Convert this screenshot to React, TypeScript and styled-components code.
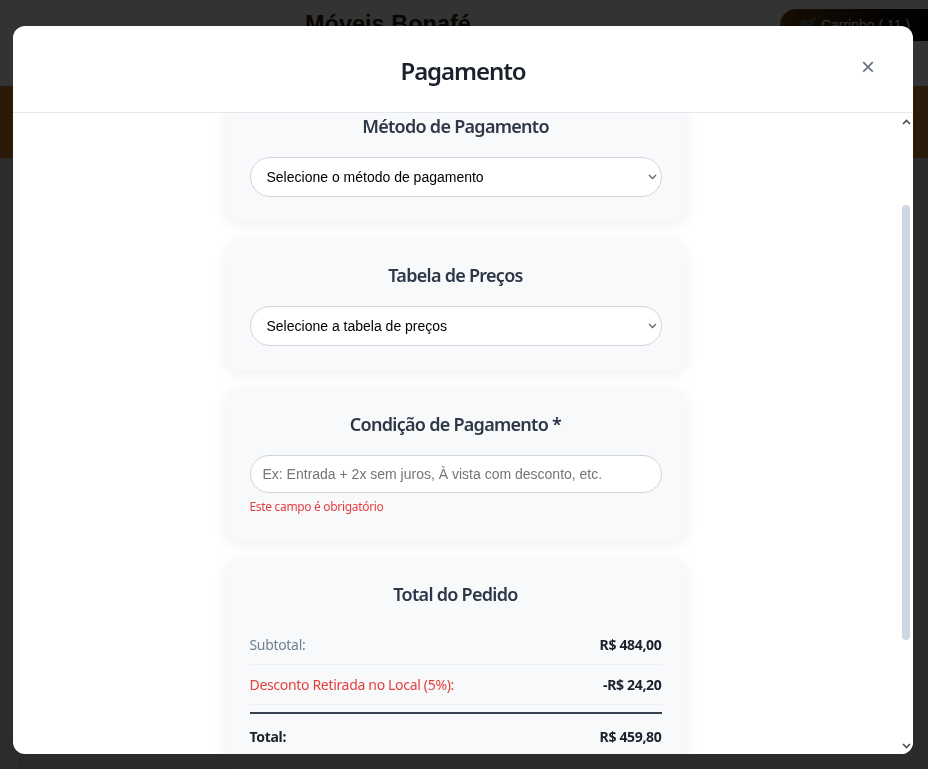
import React, { useLayoutEffect, useRef } from "react";
import styled, { createGlobalStyle } from "styled-components";

const GlobalStyle = createGlobalStyle`
  html, body { margin: 0; padding: 0; height: 100%; overflow: hidden; }
  body { font-family: "Noto Sans", "Open Sans", sans-serif; background: #dcdcdc; }
  *, *::before, *::after { box-sizing: border-box; }
`;

/* ---------- page behind the modal ---------- */
const Page = styled.div`
  height: 769px;
  display: flex;
  flex-direction: column;
  background: #dcdcdc;
`;

const SiteHeader = styled.header`
  height: 86px;
  background: #ffffff;
  display: flex;
  align-items: flex-start;
  padding: 9px 0 0 305px;
`;

const Brand = styled.h1`
  margin: 0;
  font-family: "Liberation Sans", Arial, sans-serif;
  font-size: 23.5px;
  line-height: 30px;
  font-weight: 700;
  color: #2a1a0a;
`;

const Spacer = styled.div`
  flex: 1;
`;

const CartButton = styled.button`
  width: 170px;
  margin-right: -22px;
  height: 32px;
  padding: 0 0 0 20px;
  text-align: left;
  border: none;
  border-radius: 16px;
  background: linear-gradient(90deg, #6e4210, #1a1208 60%, #000);
  color: #ffffff;
  font-family: "Liberation Sans", Arial, sans-serif;
  font-size: 14px;
`;

const Banner = styled.div`
  height: 72px;
  background: #d4842a;
`;

const SiteMain = styled.div`
  flex: 1;
  display: flex;
`;

const Sidebar = styled.aside`
  width: 208px;
  margin-left: 19px;
  border-left: 1px solid #c8c8c8;
  border-right: 1px solid #c8c8c8;
  background: #cfcfcf;
`;

const MainArea = styled.main`
  flex: 1;
  background: #d4d4d4;
`;

/* ---------- modal ---------- */
const Overlay = styled.div`
  position: fixed;
  inset: 0;
  background: rgba(0, 0, 0, 0.8);
  display: flex;
  align-items: flex-start;
  padding: 26px 15px 15px 13px;
`;

const Modal = styled.div`
  width: 900px;
  height: 728px;
  background: #ffffff;
  border-radius: 12px;
  display: flex;
  flex-direction: column;
  overflow: hidden;
  letter-spacing: -0.02em;
`;

const ModalHeader = styled.div`
  height: 87px;
  flex: none;
  display: grid;
  grid-template-columns: 1fr auto 1fr;
  align-items: center;
  padding: 0 30px;
  border-bottom: 1px solid #e5e7eb;
`;

const ModalTitle = styled.h2`
  grid-column: 2;
  margin: 4px 0 0;
  font-size: 24px;
  font-weight: 600;
  line-height: 30px;
  letter-spacing: -0.045em;
  color: #1a202c;
`;

const CloseButton = styled.button`
  grid-column: 3;
  justify-self: end;
  width: 30px;
  height: 30px;
  margin-top: -4px;
  border: none;
  background: transparent;
  color: #6b7280;
  font-family: "Liberation Sans", Arial, sans-serif;
  font-size: 24px;
  line-height: 30px;
  padding: 0;
  cursor: pointer;
`;

const ModalBody = styled.div`
  flex: 1;
  min-height: 0;
  display: flex;
`;

const ScrollArea = styled.div`
  flex: 1;
  overflow-y: auto;
  scrollbar-width: none;
  padding: 20px 1px 120px 0;
  &::-webkit-scrollbar {
    display: none;
  }
`;

const ScrollRail = styled.div`
  width: 14px;
  flex: none;
  display: flex;
  flex-direction: column;
  align-items: center;
  background: #ffffff;
`;

const RailButton = styled.div<{ $h: number }>`
  height: ${(p) => p.$h}px;
  flex: none;
  display: flex;
  align-items: center;
  justify-content: center;
  color: #4d4d4d;
`;

const RailTrack = styled.div`
  flex: 1;
  width: 100%;
  display: flex;
  justify-content: center;
`;

const RailThumb = styled.div`
  width: 8px;
  height: 435px;
  margin-top: 74px;
  border-radius: 4px;
  background: #cfd8e2;
`;

const Stack = styled.div`
  width: 462px;
  margin: 0 auto;
  display: flex;
  flex-direction: column;
  gap: 16px;
`;

const Card = styled.section`
  background: #f8f9fa;
  border-radius: 16px;
  padding: 25px;
  box-shadow: 0 4px 14px rgba(0, 0, 0, 0.06);
`;

const CardTitle = styled.h3`
  margin: 0 0 19px;
  text-align: center;
  font-size: 18px;
  font-weight: 600;
  line-height: 24px;
  letter-spacing: -0.04em;
  color: #2d3748;
`;

const SelectWrap = styled.div`
  position: relative;
`;

const Select = styled.select`
  width: 100%;
  height: 40px;
  padding: 0 24px 0 16px;
  appearance: none;
  border: 1px solid #d1d5db;
  border-radius: 20px;
  background: #ffffff;
  color: #000000;
  font-family: "Liberation Sans", Arial, sans-serif;
  font-size: 14px;
  letter-spacing: normal;
`;

const SelectChevron = styled.svg`
  position: absolute;
  right: 5px;
  top: 50%;
  transform: translateY(-50%);
  pointer-events: none;
`;

const TextInput = styled.input`
  width: 100%;
  height: 38px;
  padding: 0 12px;
  border: 1px solid #d1d5db;
  border-radius: 19px;
  background: #ffffff;
  font-family: "Liberation Sans", Arial, sans-serif;
  font-size: 14px;
  letter-spacing: normal;
  &::placeholder {
    color: #757575;
  }
`;

const ErrorText = styled.div`
  margin-top: 5px;
  font-size: 12px;
  line-height: 18px;
  color: #e53e3e;
`;

const Row = styled.div<{ $danger?: boolean }>`
  display: flex;
  justify-content: space-between;
  align-items: center;
  padding: 10px 0;
  border-bottom: 1px solid #edf0f4;
  font-size: 14px;
  line-height: 19px;
  color: ${(p) => (p.$danger ? "#e53e3e" : "#718096")};
`;

const Value = styled.span`
  font-weight: 700;
  color: #1a202c;
`;

const TotalRow = styled.div`
  margin-top: 7px;
  border-top: 2px solid #374151;
  padding: 13px 0 0;
  display: flex;
  justify-content: space-between;
  font-size: 14px;
  line-height: 19px;
  font-weight: 700;
  color: #1a202c;
`;

const Chevron = ({ up }: { up?: boolean }) => (
  <svg width="9" height="6" viewBox="0 0 9 6">
    <path
      d={up ? "M1 5 L4.5 1.5 L8 5" : "M1 1 L4.5 4.5 L8 1"}
      stroke="currentColor"
      strokeWidth="1.6"
      fill="none"
    />
  </svg>
);

const SelectField = ({ placeholder, options }: { placeholder: string; options: string[] }) => (
  <SelectWrap>
    <Select defaultValue="">
      <option value="">{placeholder}</option>
      {options.map((o) => (
        <option key={o} value={o}>
          {o}
        </option>
      ))}
    </Select>
    <SelectChevron width="9" height="6" viewBox="0 0 9 6">
      <path d="M1 1 L4.5 4.5 L8 1" stroke="#6b6b6b" strokeWidth="1.4" fill="none" />
    </SelectChevron>
  </SelectWrap>
);

export default function App() {
  const scrollRef = useRef<HTMLDivElement>(null);

  useLayoutEffect(() => {
    if (scrollRef.current) scrollRef.current.scrollTop = 44;
  }, []);

  return (
    <>
      <GlobalStyle />
      <Page>
        <SiteHeader>
          <Brand>Móveis Bonafé</Brand>
          <Spacer />
          <CartButton>🛒 Carrinho ( 11 )</CartButton>
        </SiteHeader>
        <Banner />
        <SiteMain>
          <Sidebar />
          <MainArea />
        </SiteMain>
      </Page>

      <Overlay>
        <Modal>
          <ModalHeader>
            <ModalTitle>Pagamento</ModalTitle>
            <CloseButton aria-label="Fechar">×</CloseButton>
          </ModalHeader>
          <ModalBody>
            <ScrollArea ref={scrollRef}>
              <Stack>
                <Card>
                  <CardTitle>Método de Pagamento</CardTitle>
                  <SelectField
                    placeholder="Selecione o método de pagamento"
                    options={["PIX", "Cartão de Crédito", "Boleto"]}
                  />
                </Card>

                <Card>
                  <CardTitle>Tabela de Preços</CardTitle>
                  <SelectField
                    placeholder="Selecione a tabela de preços"
                    options={["Varejo", "Atacado"]}
                  />
                </Card>

                <Card>
                  <CardTitle>Condição de Pagamento *</CardTitle>
                  <TextInput placeholder="Ex: Entrada + 2x sem juros, À vista com desconto, etc." />
                  <ErrorText>Este campo é obrigatório</ErrorText>
                </Card>

                <Card>
                  <CardTitle>Total do Pedido</CardTitle>
                  <Row>
                    <span>Subtotal:</span>
                    <Value>R$ 484,00</Value>
                  </Row>
                  <Row $danger>
                    <span>Desconto Retirada no Local (5%):</span>
                    <Value>-R$ 24,20</Value>
                  </Row>
                  <TotalRow>
                    <span>Total:</span>
                    <span>R$ 459,80</span>
                  </TotalRow>
                </Card>
              </Stack>
            </ScrollArea>
            <ScrollRail>
              <RailButton $h={18}>
                <Chevron up />
              </RailButton>
              <RailTrack>
                <RailThumb />
              </RailTrack>
              <RailButton $h={17}>
                <Chevron />
              </RailButton>
            </ScrollRail>
          </ModalBody>
        </Modal>
      </Overlay>
    </>
  );
}
